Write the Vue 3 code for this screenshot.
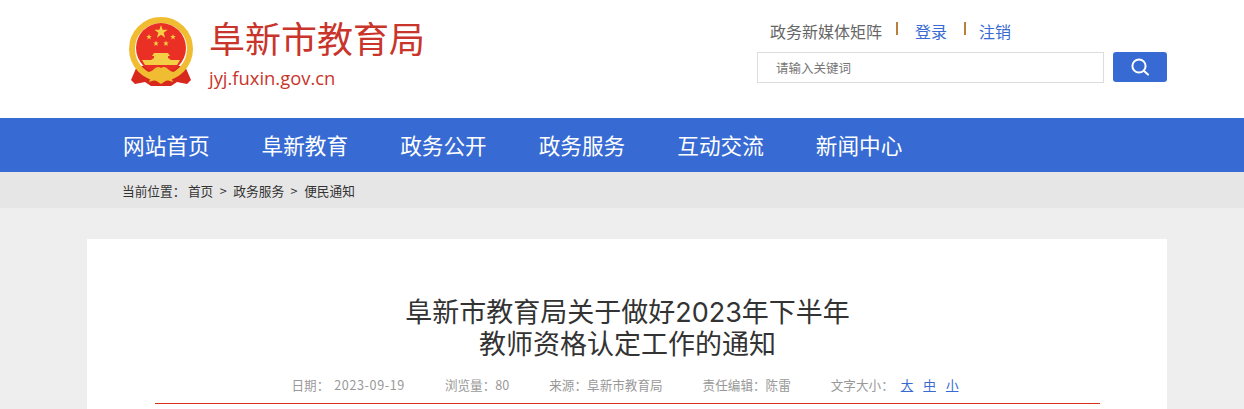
<script setup>
const navItems = ['网站首页', '阜新教育', '政务公开', '政务服务', '互动交流', '新闻中心']
const crumbs = ['首页', '政务服务', '便民通知']

// five pointed star as polygon points
function star(cx, cy, r) {
  const pts = []
  for (let i = 0; i < 10; i++) {
    const rad = i % 2 ? r * 0.4 : r
    const a = -Math.PI / 2 + (i * Math.PI) / 5
    pts.push((cx + rad * Math.cos(a)).toFixed(2) + ',' + (cy + rad * Math.sin(a)).toFixed(2))
  }
  return pts.join(' ')
}

const stars = [
  star(34, 16, 7),
  star(22, 21, 3),
  star(46, 21, 3),
  star(29, 27.5, 3),
  star(39, 27.5, 3)
]
</script>

<template>
  <div class="page">
    <header class="top">
      <div class="logo">
        <svg class="emblem" width="68" height="72" viewBox="0 0 68 72">
          <path d="M10 50 L4 64 L8 68 L18 66 L24 70 L44 70 L50 66 L60 68 L64 64 L58 50 Z" fill="#d8281e" />
          <circle cx="34" cy="33" r="29" fill="none" stroke="#f0bd32" stroke-width="6" />
          <circle cx="34" cy="32" r="25" fill="#ea2f24" />
          <polygon v-for="(p, i) in stars" :key="i" :points="p" fill="#f4cf45" />
          <path d="M27 37 L41 37 L43 40 L41 40 L41 42 L44 44 L24 44 L27 42 L27 40 L25 40 Z" fill="#f4cf45" />
          <path d="M15 44 L53 44 L50 49 L18 49 Z" fill="#f4cf45" />
          <path d="M12 53 C18 57 22 57 26 54 C29 51 31 50 34 52 C37 50 39 51 42 54 C46 57 50 57 56 53 L54 58 C50 60 46 60 43 59 L46 66 L40 64 L34 68 L28 64 L22 66 L25 59 C22 60 18 60 14 58 Z" fill="#f0bd32" />
        </svg>
        <div class="logo-text">
          <div class="logo-name">阜新市教育局</div>
          <div class="logo-url">jyj.fuxin.gov.cn</div>
        </div>
      </div>
      <div class="tools">
        <div class="links">
          <span class="media">政务新媒体矩阵</span>
          <i class="sep"></i>
          <a class="link">登录</a>
          <i class="sep"></i>
          <a class="link">注销</a>
        </div>
        <div class="search">
          <div class="search-input">请输入关键词</div>
          <button class="search-btn">
            <svg width="20" height="20" viewBox="0 0 20 20" fill="none" stroke="#fff" stroke-width="2">
              <circle cx="9" cy="9" r="6.6" />
              <path d="M14 14 L18 17.6" stroke-linecap="round" />
            </svg>
          </button>
        </div>
      </div>
    </header>

    <nav class="nav">
      <a v-for="item in navItems" :key="item" class="nav-item">{{ item }}</a>
    </nav>

    <div class="crumb-bar">
      <div class="crumbs">
        <span class="crumb-label">当前位置：</span>
        <template v-for="(c, i) in crumbs" :key="c">
          <span v-if="i > 0" class="arrow">&gt;</span>
          <span>{{ c }}</span>
        </template>
      </div>
    </div>

    <main class="card">
      <h1 class="title">阜新市教育局关于做好2023年下半年<br>教师资格认定工作的通知</h1>
      <div class="meta">
        <span>日期：<span class="date">2023-09-19</span></span>
        <span>浏览量：80</span>
        <span>来源：阜新市教育局</span>
        <span>责任编辑：陈雷</span>
        <span class="size">文字大小：<a>大</a><a>中</a><a>小</a></span>
      </div>
    </main>
  </div>
</template>

<style>
html, body {
  margin: 0;
  background: #eeeeee;
}
</style>

<style scoped>
.page {
  width: 1244px;
  height: 409px;
  overflow: hidden;
  background: #eeeeee;
  font-family: "Noto Sans CJK SC", "Liberation Sans", sans-serif;
}

.top {
  height: 118px;
  background: #fff;
  padding: 0 77px 0 127px;
  box-sizing: border-box;
  display: flex;
  justify-content: space-between;
}

.logo {
  display: flex;
  padding-top: 16px;
}

.emblem {
  display: block;
}

.logo-text {
  margin-left: 14px;
  color: #c9352b;
}

.logo-name {
  font-size: 36px;
  line-height: 44px;
  margin-top: -1px;
}

.logo-url {
  font-family: "Open Sans", "Liberation Sans", sans-serif;
  font-size: 18.4px;
  line-height: 24px;
  margin-top: 7px;
}

.tools {
  width: 410px;
  padding-top: 18px;
}

.links {
  display: flex;
  align-items: center;
  height: 26px;
  padding-left: 13px;
  font-size: 16px;
  color: #666;
}

.sep {
  width: 2px;
  height: 13px;
  margin: 0 17px 5px 14px;
  background: #b9803a;
}

.link {
  color: #376bd3;
}

.link + .sep {
  margin: 0 13px 5px 17px;
}

.search {
  display: flex;
  justify-content: space-between;
  margin-top: 8px;
}

.search-input {
  width: 347px;
  height: 31px;
  border: 1px solid #ddd;
  box-sizing: border-box;
  padding-left: 18px;
  font-size: 12.5px;
  line-height: 29px;
  color: #777;
}

.search-btn {
  width: 54px;
  height: 30px;
  padding: 0;
  border: 0;
  border-radius: 3px;
  background: #376bd3;
  display: flex;
  align-items: center;
  justify-content: center;
}

.nav {
  height: 54px;
  padding-bottom: 2px;
  box-sizing: border-box;
  background: #376bd3;
  display: flex;
  align-items: center;
  gap: 52px;
  padding-left: 123px;
}

.nav-item {
  font-size: 21.65px;
  color: #fff;
}

.crumb-bar {
  height: 36px;
  background: #e6e6e6;
  padding-left: 122px;
}

.crumbs {
  display: flex;
  align-items: center;
  height: 36px;
  font-size: 12.7px;
  color: #333;
}

.crumb-label {
  margin-right: 2.5px;
}

.arrow {
  margin: 0 6.5px;
}

.card {
  width: 1080px;
  margin: 31px 0 0 87px;
  height: 300px;
  background: #fff;
  padding: 58px 67px 0 68px;
  box-sizing: border-box;
}

.title {
  margin: 0;
  text-align: center;
  font-family: Inter, "Noto Sans CJK SC", sans-serif;
  font-size: 27px;
  font-weight: 400;
  line-height: 32px;
  color: #333;
}

.meta {
  margin-top: 8px;
  height: 35px;
  padding-right: 5px;
  border-bottom: 1px solid #d9301c;
  box-sizing: border-box;
  display: flex;
  justify-content: center;
  gap: 40px;
  font-size: 12.6px;
  line-height: 32px;
  color: #999;
}

.date {
  margin-left: 5px;
  letter-spacing: 0.6px;
}

.size a {
  color: #376bd3;
  text-decoration: underline;
  margin-right: 10px;
}

.size a:first-child {
  margin-left: 7px;
}

.size a:last-child {
  margin-right: 0;
}
</style>
